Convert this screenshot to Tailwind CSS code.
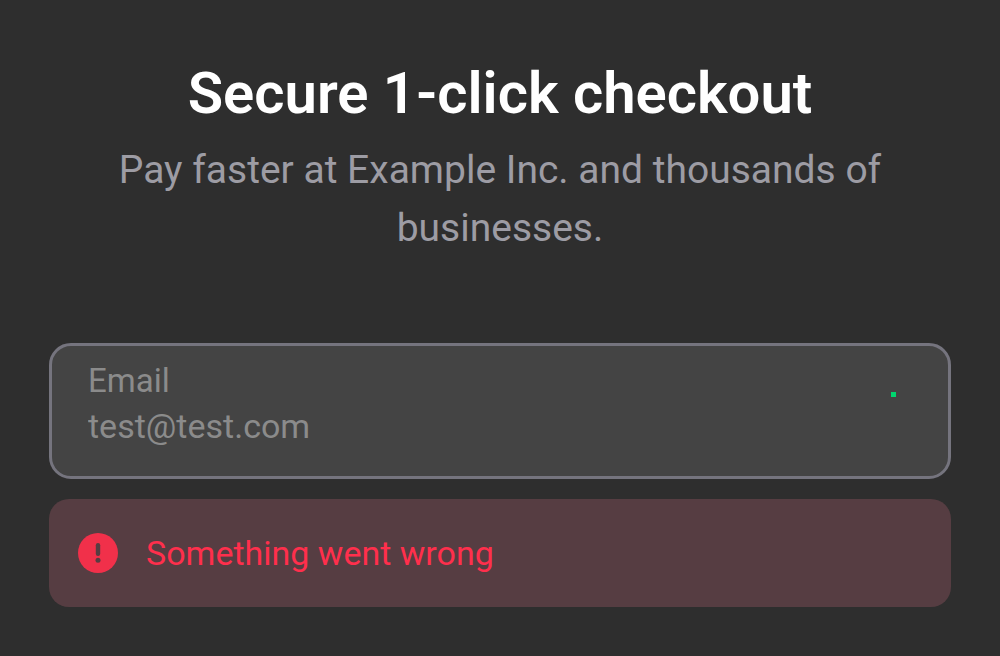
<!DOCTYPE html>
<html lang="en">
<head>
<meta charset="utf-8">
<meta name="viewport" content="width=device-width, initial-scale=1">
<title>Secure 1-click checkout</title>
<script src="https://cdn.jsdelivr.net/npm/@tailwindcss/browser@4"></script>
</head>
<body class="min-h-screen bg-[#2e2e2e] font-['Roboto',sans-serif]">
<main class="px-[49px] pt-[58px] pb-12">
  <header class="text-center">
    <h1 class="text-[58px] leading-[70px] font-semibold text-white">Secure 1-click checkout</h1>
    <p class="mx-auto mt-[13px] max-w-[800px] text-[39px] leading-[58px] text-[#9d9ca4]">Pay faster at Example Inc. and thousands of businesses.</p>
  </header>
  <form class="mt-[86px]">
    <div class="relative rounded-[22px] border-3 border-[#75747e] bg-[#444444] px-9 pt-[11px] pb-7">
      <label for="email" class="block text-[33px] leading-12 text-[#8b8b8b]">Email</label>
      <input id="email" type="email" value="test@test.com" class="block h-[43px] w-full bg-transparent text-[34px] leading-[43px] text-[#8b8b8b] outline-none">
      <span class="absolute top-[46px] right-[52px] size-[5px] bg-[#00d66f]"></span>
    </div>
    <div role="alert" class="mt-5 flex items-center gap-7 rounded-[20px] bg-[#563d42] px-[29px] py-7 text-[34px] leading-[52px] text-[#ff2f4c]">
      <svg class="size-10 shrink-0" viewBox="0 0 40 40" aria-hidden="true"><circle cx="20" cy="20" r="20" fill="#f1304a"/><path d="M20 12.2v8.6" fill="none" stroke="#563d42" stroke-width="4.4" stroke-linecap="round"/><circle cx="20" cy="27.3" r="2.5" fill="#563d42"/></svg>
      <p>Something went wrong</p>
    </div>
  </form>
</main>
</body>
</html>
